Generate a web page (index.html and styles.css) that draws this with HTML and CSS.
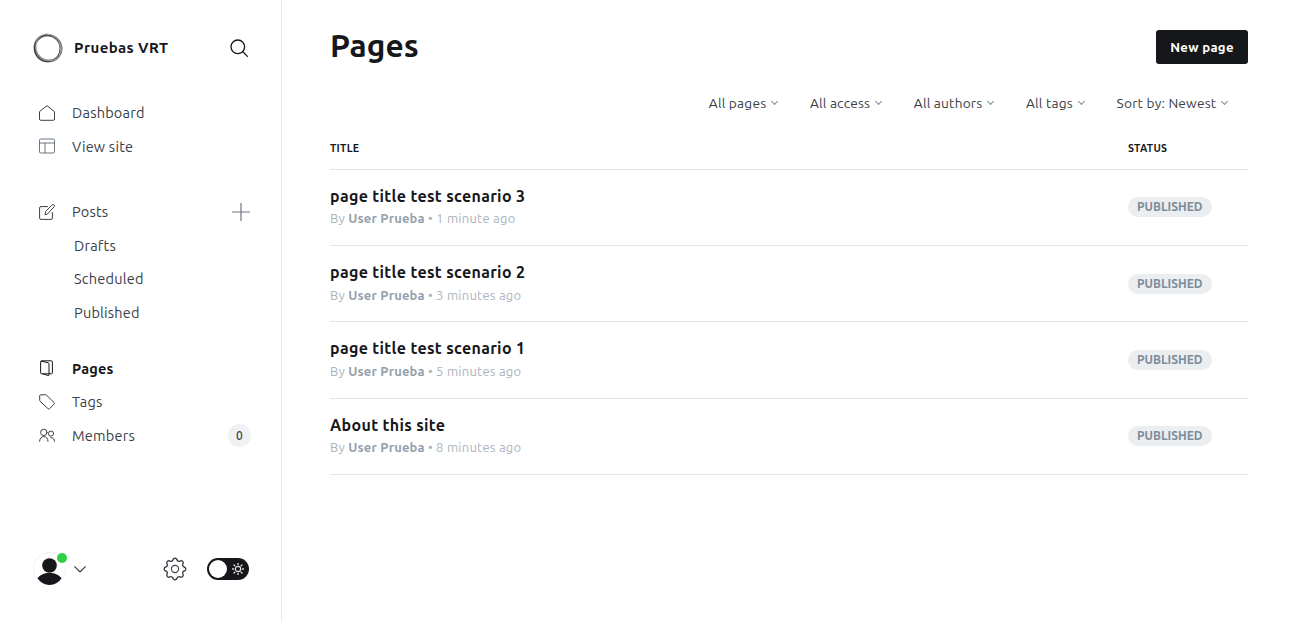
FILE: index.html
```html
<!DOCTYPE html>
<html lang="en">
  <head>
    <meta charset="UTF-8" />
    <meta name="viewport" content="width=device-width, initial-scale=1.0" />
    <title>Pages</title>
    <link rel="stylesheet" href="styles.css">
  </head>
  <body>
    <aside class="sidebar">
      <div class="brand">
        <svg class="logo" viewBox="0 0 30 30" fill="none">
          <ellipse cx="15" cy="15" rx="13.4" ry="12.6" stroke="#7d7d7d" stroke-width="2.8" transform="rotate(35 15 15)"/>
          <ellipse cx="14.4" cy="15.4" rx="12.8" ry="13.4" stroke="#333" stroke-width="1.1"/>
          <ellipse cx="15.6" cy="14.6" rx="12" ry="13.8" stroke="#b5b5b5" stroke-width=".8" transform="rotate(-30 15 15)"/>
        </svg>
        <span class="brand-name">Pruebas VRT</span>
        <svg class="search" viewBox="0 0 18 18" fill="none" stroke="#15171a" stroke-width="1.3" stroke-linecap="round">
          <circle cx="7.8" cy="7.8" r="6.8"/>
          <path d="M12.8 12.8l4.6 4.6"/>
        </svg>
      </div>

      <nav class="nav-group first">
        <a class="nav-item">
          <svg class="nav-icon" viewBox="0 0 16 16" fill="none" stroke="#394047" stroke-linejoin="round"><path d="M.5 6.6L8 .7l7.5 5.9v7.4a1.300 1.300 0 0 1-1.300 1.300H1.800A1.300 1.300 0 0 1 .5 14z"/></svg>
          <span>Dashboard</span>
        </a>
        <a class="nav-item">
          <svg class="nav-icon" viewBox="0 0 16 16" fill="none" stroke="#6b7680"><rect x=".5" y="1" width="15" height="14" rx="1.2"/><path d="M.5 5h15M6 5v10"/></svg>
          <span>View site</span>
        </a>
      </nav>

      <nav class="nav-group posts">
        <a class="nav-item">
          <svg class="nav-icon" viewBox="0 0 16 16" fill="none" stroke="#394047" stroke-linejoin="round" stroke-linecap="round"><path d="M8.5 2.600H2a1.400 1.400 0 0 0-1.400 1.400v10a1.400 1.400 0 0 0 1.400 1.400h10a1.400 1.400 0 0 0 1.400-1.400V8.500"/><path d="M6 10.400l.7-3L13.200.9a1.300 1.300 0 0 1 1.900 0 1.300 1.300 0 0 1 0 1.900L8.900 9.600z"/></svg>
          <span>Posts</span>
          <svg class="plus" viewBox="0 0 18 18" fill="none" stroke="#6b7680" stroke-width="1.2"><path d="M9 0v18M0 9h18"/></svg>
        </a>
        <a class="nav-item sub">Drafts</a>
        <a class="nav-item sub">Scheduled</a>
        <a class="nav-item sub">Published</a>
      </nav>

      <nav class="nav-group pages">
        <a class="nav-item active">
          <svg class="nav-icon" viewBox="0 0 16 16" fill="none" stroke="#15171a" stroke-linejoin="round"><path d="M2.600.8h9.800a1 1 0 0 1 1 1v11a1 1 0 0 1-1 1H2.600a1 1 0 0 1-1-1v-11a1 1 0 0 1 1-1z"/><path d="M2 1.100l7.400 1.700a.8.8 0 0 1 .6.800v11.200a.7.7 0 0 1-.9.700L3.500 13.800"/></svg>
          <span>Pages</span>
        </a>
        <a class="nav-item">
          <svg class="nav-icon" viewBox="0 0 16 16" fill="none" stroke="#394047" stroke-linejoin="round"><path d="M1.600.8h5.200a1 1 0 0 1 .7.3l7.600 7.500a1 1 0 0 1 0 1.400l-4.600 4.700a1 1 0 0 1-1.400 0L1 7.200a1 1 0 0 1-.3-.7V1.700a.9.9 0 0 1 .9-.9z"/></svg>
          <span>Tags</span>
        </a>
        <a class="nav-item">
          <svg class="nav-icon" viewBox="0 0 16 16" fill="none" stroke="#394047" stroke-linecap="round"><circle cx="4.800" cy="5.400" r="3.200"/><path d="M.6 14.300c0-2.800 1.800-4.700 4.200-4.700s4.200 1.900 4.200 4.700"/><circle cx="12" cy="6.600" r="2.600"/><path d="M11.800 10.600c2.200 0 3.700 1.500 3.700 3.700"/></svg>
          <span>Members</span>
          <span class="count">0</span>
        </a>
      </nav>

      <div class="sidebar-foot">
        <div class="avatar">
          <svg viewBox="0 0 33 33" width="33" height="33"><circle cx="16.5" cy="16.5" r="16.2" fill="#fff" stroke="#e8e8e8" stroke-width=".6"/><circle cx="16.5" cy="13.500" r="7.300" fill="#15171a"/><path d="M4.600 26.600c1.600-3.600 6.600-5.600 11.900-5.600s10.300 2 11.900 5.600C25.400 30.700 21.200 33 16.500 33S7.600 30.700 4.600 26.600z" fill="#15171a"/></svg>
          <span class="online"></span>
        </div>
        <svg class="caret" viewBox="0 0 12 7" fill="none" stroke="#394047" stroke-width="1.1" stroke-linecap="round" stroke-linejoin="round"><path d="M.7.7L6 6l5.300-5.300"/></svg>
        <svg class="gear" viewBox="0 0 24 24" fill="none" stroke="#394047" stroke-width="1.15" stroke-linecap="round" stroke-linejoin="round"><path d="M10.325 4.317c.426-1.756 2.924-1.756 3.35 0a1.724 1.724 0 002.573 1.066c1.543-.94 3.31.826 2.37 2.37a1.724 1.724 0 001.065 2.572c1.756.426 1.756 2.924 0 3.35a1.724 1.724 0 00-1.066 2.573c.94 1.543-.826 3.31-2.37 2.37a1.724 1.724 0 00-2.572 1.065c-.426 1.756-2.924 1.756-3.35 0a1.724 1.724 0 00-2.573-1.066c-1.543.94-3.31-.826-2.37-2.37a1.724 1.724 0 00-1.065-2.572c-1.756-.426-1.756-2.924 0-3.35a1.724 1.724 0 001.066-2.573c-.94-1.543.826-3.31 2.37-2.37.996.608 2.296.07 2.572-1.065z" transform="translate(-2.4 -2.4) scale(1.2)"/><circle cx="12" cy="12" r="3.6"/></svg>
        <div class="toggle">
          <span class="knob"></span>
          <svg class="sun" viewBox="0 0 12 12" fill="none" stroke="#e4e4e4" stroke-linecap="round"><circle cx="6" cy="6" r="2.700" stroke-width="1.200"/><path stroke-width="1.300" d="M6 .4v1.100M6 10.500v1.100M.4 6h1.100M10.500 6h1.100M2 2l.8.8M9.200 9.200l.8.8M2 10l.8-.8M9.200 2.800l.8-.8"/></svg>
        </div>
      </div>
    </aside>

    <main class="content">
      <header class="page-head">
        <h1>Pages</h1>
        <button class="btn-new">New page</button>
      </header>

      <div class="filters">
        <span class="filter">All pages</span>
        <span class="filter">All access</span>
        <span class="filter">All authors</span>
        <span class="filter">All tags</span>
        <span class="filter">Sort by: Newest</span>
      </div>

      <div class="list">
        <div class="list-head">
          <span>TITLE</span>
          <span>STATUS</span>
        </div>
        <div class="row">
          <div>
            <h3>page title test scenario 3</h3>
            <p class="meta">By <b>User Prueba</b> • 1 minute ago</p>
          </div>
          <div class="status"><span class="badge">PUBLISHED</span></div>
        </div>
        <div class="row">
          <div>
            <h3>page title test scenario 2</h3>
            <p class="meta">By <b>User Prueba</b> • 3 minutes ago</p>
          </div>
          <div class="status"><span class="badge">PUBLISHED</span></div>
        </div>
        <div class="row">
          <div>
            <h3>page title test scenario 1</h3>
            <p class="meta">By <b>User Prueba</b> • 5 minutes ago</p>
          </div>
          <div class="status"><span class="badge">PUBLISHED</span></div>
        </div>
        <div class="row">
          <div>
            <h3>About this site</h3>
            <p class="meta">By <b>User Prueba</b> • 8 minutes ago</p>
          </div>
          <div class="status"><span class="badge">PUBLISHED</span></div>
        </div>
      </div>
    </main>
  </body>
</html>
```

FILE: styles.css
```css
* {
  padding: 0;
  margin: 0;
  box-sizing: border-box;
}
html {
  font-size: 16px;
  font-family: Ubuntu, 'Noto Sans', 'Open Sans', sans-serif;
  color: #15171a;
  background-color: #fff;
}
body {
  display: flex;
  height: 100vh;
  overflow: hidden;
}

/* sidebar */
.sidebar {
  flex: 0 0 282px;
  display: flex;
  flex-direction: column;
  padding: 33px 31px 36px 33px;
  border-right: 1px solid #e5e8ea;
}
.brand {
  display: flex;
  align-items: center;
  height: 30px;
}
.logo {
  width: 30px;
  height: 30px;
  margin-right: 11px;
}
.brand-name {
  margin-top: -1px;
  font-size: 15px;
  font-weight: 700;
  letter-spacing: 0.4px;
}
.search {
  width: 18px;
  height: 18px;
  margin-left: auto;
  margin-right: 2px;
}
.nav-group.first {
  margin-top: 32.9px;
}
.nav-group.posts {
  margin-top: 32.2px;
}
.nav-group.pages {
  margin-top: 22.5px;
}
.nav-item {
  display: flex;
  align-items: center;
  height: 33.5px;
  padding-left: 6px;
  font-size: 14.5px;
  letter-spacing: 0.22px;
  color: #394047;
}
.nav-icon {
  flex: 0 0 16px;
  width: 16px;
  height: 16px;
  margin-right: 17px;
}
.nav-item.sub {
  padding-left: 41px;
}
.nav-item.active {
  font-weight: 700;
  color: #15171a;
}
.plus {
  width: 18px;
  height: 18px;
  margin-left: auto;
}
.count {
  display: flex;
  align-items: center;
  justify-content: center;
  width: 23px;
  height: 23px;
  margin-left: auto;
  margin-right: -1px;
  border-radius: 50%;
  font-size: 12px;
  font-weight: 500;
  color: #394047;
  background-color: #eff1f3;
}
.sidebar-foot {
  display: flex;
  align-items: center;
  margin-top: auto;
  height: 33px;
  padding-right: 1px;
}
.avatar {
  position: relative;
  width: 33px;
  height: 33px;
}
.online {
  position: absolute;
  top: 1px;
  right: -1px;
  width: 10px;
  height: 10px;
  border-radius: 50%;
  background-color: #30cf43;
}
.caret {
  width: 12px;
  height: 7px;
  margin-top: 1px;
  margin-left: 8px;
}
.gear {
  width: 24px;
  height: 24px;
  margin-left: auto;
}
.toggle {
  display: flex;
  align-items: center;
  justify-content: space-between;
  width: 42px;
  height: 22px;
  margin-left: 20px;
  padding: 0 5px 0 2px;
  border-radius: 11px;
  background-color: #15171a;
}
.knob {
  width: 18px;
  height: 18px;
  border-radius: 50%;
  background-color: #fff;
}
.sun {
  width: 12px;
  height: 12px;
}

/* main */
.content {
  flex: 1;
  padding: 30px 48px 0;
}
.page-head {
  display: flex;
  align-items: center;
  justify-content: space-between;
  height: 34px;
}
h1 {
  position: relative;
  top: -2px;
  font-size: 31.7px;
  font-weight: 700;
  line-height: 34px;
}
.btn-new {
  width: 92px;
  height: 34px;
  border: none;
  border-radius: 3px;
  font-family: inherit;
  font-size: 13.2px;
  font-weight: 700;
  letter-spacing: 0.3px;
  color: #fff;
  background-color: #15171a;
}
.filters {
  display: flex;
  justify-content: flex-end;
  gap: 31.6px;
  margin-top: 28px;
  padding-right: 19.6px;
  height: 22px;
  align-items: center;
}
.filter {
  display: flex;
  align-items: center;
  font-size: 13.7px;
  letter-spacing: 0.2px;
  color: #394047;
}
.filter::after {
  content: "";
  width: 4px;
  height: 4px;
  margin: -3px 1px 0 6px;
  border-right: 1px solid #7c8b9a;
  border-bottom: 1px solid #7c8b9a;
  transform: rotate(45deg);
}
.list-head,
.row {
  display: grid;
  grid-template-columns: 1fr 120px;
  border-bottom: 1px solid #e5e8ea;
}
.list-head {
  align-items: end;
  height: 56px;
  padding-bottom: 14px;
  font-size: 10.5px;
  font-weight: 600;
  letter-spacing: 0.3px;
  line-height: 14px;
}
.row {
  align-items: center;
  height: 76.2px;
}
h3 {
  margin-top: -2.8px;
  font-size: 16px;
  font-weight: 700;
  letter-spacing: 0.33px;
  line-height: 22px;
}
.meta {
  margin-top: 2.4px;
  font-size: 13px;
  letter-spacing: 0.24px;
  line-height: 18px;
  color: #abb4be;
}
.meta b {
  font-weight: 700;
  letter-spacing: 0.17px;
  color: #95a1ad;
}
.status {
  display: flex;
}
.badge {
  height: 20px;
  margin-top: -0.4px;
  padding: 0 9px;
  border-radius: 10px;
  font-size: 12px;
  font-weight: 700;
  line-height: 20px;
  color: #7c8b9a;
  background-color: #ebeef0;
}
```
